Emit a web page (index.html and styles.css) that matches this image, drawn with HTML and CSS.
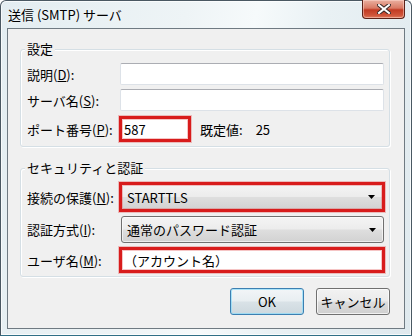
FILE: index.html
```html
<!DOCTYPE html>
<html lang="ja">
  <head>
    <meta charset="UTF-8">
    <title>送信 (SMTP) サーバ</title>
    <link rel="stylesheet" href="styles.css">
  </head>
  <body>
  <div class="window">
    <div class="titlebar">
      <span class="title">送信 (SMTP) サーバ</span>
      <button class="close" aria-label="閉じる">
        <svg width="14" height="10" viewBox="0 0 14 10">
          <path d="M2 1 L12 9 M12 1 L2 9" stroke="#3a2a28" stroke-width="4" stroke-linecap="square"/>
          <path d="M2 1 L12 9 M12 1 L2 9" stroke="#fff" stroke-width="2" stroke-linecap="square"/>
        </svg>
      </button>
    </div>

    <div class="client">
      <div class="group group-server">
        <span class="legend">設定</span>
        <div class="row">
          <label class="label">説明(<u>D</u>):</label>
          <div class="textbox"></div>
        </div>
        <div class="row">
          <label class="label">サーバ名(<u>S</u>):</label>
          <div class="textbox"></div>
        </div>
        <div class="row">
          <label class="label">ポート番号(<u>P</u>):</label>
          <div class="mark mark-port"><span class="value">587</span></div>
          <span class="default">既定値:</span>
          <span class="default-value">25</span>
        </div>
      </div>

      <div class="group group-security">
        <span class="legend">セキュリティと認証</span>
        <div class="row row-tall">
          <label class="label">接続の保護(<u>N</u>):</label>
          <div class="mark mark-combo">
            <span class="value">STARTTLS</span>
            <svg class="arrow" width="7" height="4" viewBox="0 0 7 4"><path d="M0 0 H7 L3.5 4 Z" fill="#000"/></svg>
          </div>
        </div>
        <div class="row row-combo">
          <label class="label">認証方式(<u>I</u>):</label>
          <div class="combo">
            <span class="value">通常のパスワード認証</span>
            <svg class="arrow" width="7" height="4" viewBox="0 0 7 4"><path d="M0 0 H7 L3.5 4 Z" fill="#000"/></svg>
          </div>
        </div>
        <div class="row">
          <label class="label">ユーザ名(<u>M</u>):</label>
          <div class="mark mark-wide"><span class="value">（アカウント名）</span></div>
        </div>
      </div>

      <div class="buttons">
        <button class="btn btn-default">OK</button>
        <button class="btn">キャンセル</button>
      </div>
    </div>
  </div>
</body>
</html>
```

FILE: styles.css
```css
html, body {
  margin: 0;
  padding: 0;
  background: #fff;
}

body {
  font-family: "Noto Sans CJK JP", "Noto Sans", sans-serif;
  font-size: 13px;
  color: #000;
}

.window {
  box-sizing: border-box;
  width: 412px;
  height: 336px;
  padding: 0 6px 6px 6px;
  border: 1px solid #4a5862;
  border-bottom-color: #2f6f86;
  border-radius: 6px 6px 0 0;
  background: linear-gradient(100deg, #e3edf1 0%, #eef4f6 40%, #f6fafb 55%, #e9f1f4 70%, #dfe9ee 100%);
  box-shadow: inset 0 0 0 1px rgba(255, 255, 255, 0.7);
}

.titlebar {
  height: 27px;
  display: flex;
  align-items: flex-start;
}

.title {
  padding: 4px 0 0 1px;
  line-height: 19px;
  font-size: 13px;
  text-shadow: 0 0 6px rgba(255, 255, 255, 0.9);
}

.close {
  margin-left: auto;
  margin-top: -1px;
  width: 43px;
  height: 19px;
  padding: 0;
  border: 1px solid #5c2218;
  border-top: none;
  border-radius: 0 0 4px 4px;
  background: linear-gradient(#eab0a0 0%, #d97a64 45%, #c23a22 55%, #d0553a 85%, #e07a5c 100%);
  box-shadow: inset 0 0 0 1px rgba(255, 220, 210, 0.5);
  display: flex;
  align-items: center;
  justify-content: center;
}

.client {
  box-sizing: border-box;
  height: 301px;
  border: 1px solid #6f7a82;
  background: #f0f0f0;
  padding-top: 20px;
}

.group {
  position: relative;
  box-sizing: border-box;
  width: 370px;
  margin-left: 12px;
  padding: 13px 4px 0 6px;
  border: 1px solid #d5dfe5;
  border-radius: 3px;
  box-shadow: inset 1px 1px 0 #fff, 1px 1px 0 #fff;
  display: flex;
  flex-direction: column;
  gap: 4px;
}

.group-server {
  height: 98px;
}

.group-security {
  height: 109px;
  margin-top: 21px;
}

.legend {
  position: absolute;
  top: -10px;
  left: 4px;
  padding: 0 2px;
  line-height: 18px;
  background: #f0f0f0;
}

.row {
  display: flex;
  align-items: center;
  height: 22px;
}

.group-server .row:last-child {
  height: 26px;
  margin-top: 1px;
}

.group-security .row {
  height: 26px;
}

.group-security .row-tall {
  height: 30px;
}

.group-security .row-combo {
  height: 27px;
}

.label {
  width: 92px;
  flex: none;
  white-space: nowrap;
}

.textbox {
  box-sizing: border-box;
  width: 264px;
  height: 22px;
  margin-left: 1px;
  background: #fff;
  border: 1px solid #dde2e8;
  border-top-color: #abadb3;
  border-radius: 2px;
}

.mark {
  box-sizing: border-box;
  height: 100%;
  border: 3px solid #d81c1c;
  box-shadow: 0 0 0 1px rgba(225, 90, 90, 0.35), inset 0 0 0 1px rgba(225, 90, 90, 0.35);
  background: #fff;
  display: flex;
  align-items: center;
  padding-left: 2px;
}

.mark-port {
  width: 72px;
}

.mark-wide {
  width: 266px;
}

.mark-combo {
  width: 266px;
  padding-left: 5px;
  background: linear-gradient(#f4f4f4 0%, #ececec 48%, #dedede 52%, #d2d2d2 100%);
}

.combo {
  box-sizing: border-box;
  width: 263px;
  height: 27px;
  margin-left: 2px;
  padding-left: 5px;
  border: 1px solid #707070;
  border-radius: 3px;
  background: linear-gradient(#f4f4f4 0%, #ececec 48%, #dedede 52%, #d2d2d2 100%);
  box-shadow: inset 0 0 0 1px rgba(255, 255, 255, 0.6);
  display: flex;
  align-items: center;
}

.arrow {
  margin-left: auto;
  margin-right: 7px;
}

.default {
  margin-left: 9px;
}

.default-value {
  margin-left: 13px;
}

.buttons {
  display: flex;
  justify-content: flex-end;
  gap: 12px;
  margin-top: 11px;
  margin-right: 14px;
}

.btn {
  box-sizing: border-box;
  width: 74px;
  height: 27px;
  padding: 0;
  font-family: inherit;
  font-size: 13px;
  color: #000;
  border: 1px solid #707070;
  border-radius: 3px;
  background: linear-gradient(#f2f2f2 0%, #ebebeb 48%, #dddddd 52%, #cfcfcf 100%);
  box-shadow: inset 0 0 0 1px rgba(255, 255, 255, 0.7);
}

.btn-default {
  border-color: #3c7fb1;
  background: linear-gradient(#f2f5f7 0%, #e8eef1 48%, #d9e2e7 52%, #cdd8de 100%);
  box-shadow: inset 0 0 0 1px rgba(140, 220, 250, 0.7);
}
```
